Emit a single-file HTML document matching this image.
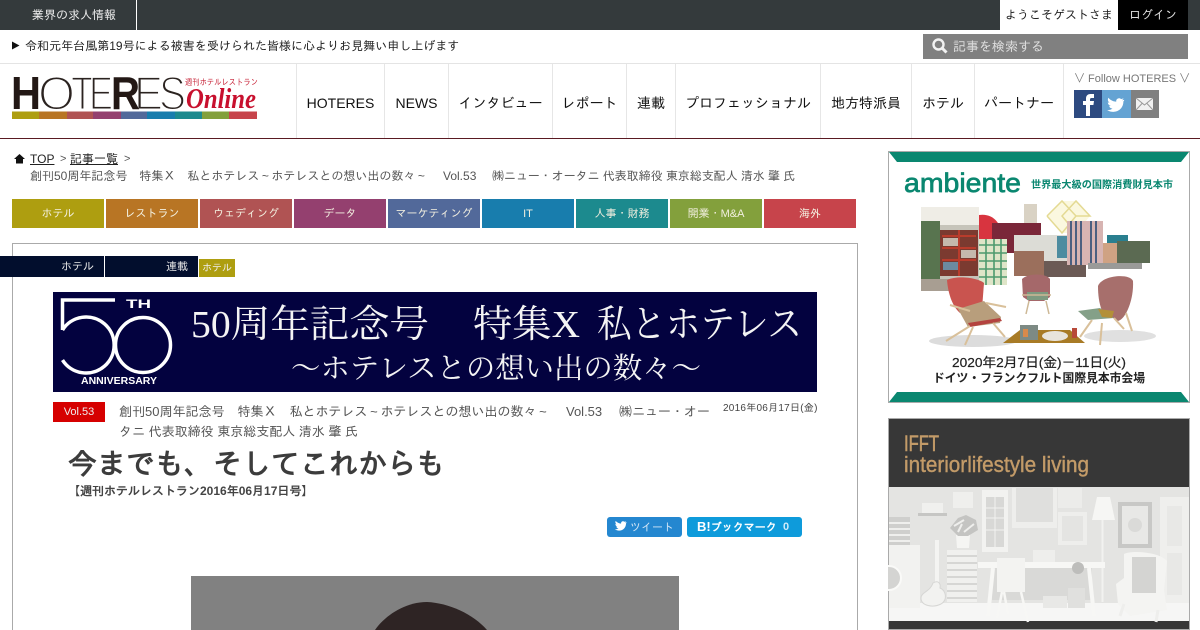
<!DOCTYPE html>
<html lang="ja">
<head>
<meta charset="utf-8">
<title>HOTERES Online</title>
<style>
html,body{margin:0;padding:0;background:#fff;width:1200px;height:630px;overflow:hidden;}
#p{position:relative;width:1200px;height:630px;overflow:hidden;font-family:"Liberation Sans","IPAGothic","Noto Sans CJK JP",sans-serif;font-size:12px;color:#333;}
.a{position:absolute;white-space:nowrap;}
.nav{position:absolute;top:64px;height:74px;line-height:78px;text-align:center;font-size:14px;color:#111;border-left:1px solid #e6e6e6;box-sizing:border-box;}
.cat{position:absolute;top:199px;width:92px;height:29px;line-height:30px;text-align:center;font-size:11px;color:#f3f0e0;}
.t{display:inline-block;width:1em;text-align:center;}
svg{position:absolute;display:block;}
</style>
</head>
<body>
<div id="p">
<!-- top bar -->
<div class="a" style="left:0;top:0;width:1200px;height:30px;background:#343a3c;"></div>
<div class="a" style="left:136px;top:0;width:1px;height:30px;background:#fff;"></div>
<div class="a" style="left:32px;top:0;line-height:30px;color:#eee;font-size:12px;">業界の求人情報</div>
<div class="a" style="left:1000px;top:0;width:118px;height:30px;background:#fff;line-height:30px;text-align:center;font-size:12px;color:#222;">ようこそゲストさま</div>
<div class="a" style="left:1118px;top:0;width:70px;height:30px;background:#000;line-height:30px;text-align:center;font-size:12px;color:#ddd;">ログイン</div>

<!-- notice -->
<svg style="left:12px;top:41px" width="8" height="9"><path d="M0 0.5L7.5 4.5L0 8.5Z" fill="#111"/></svg>
<div class="a" style="left:25px;top:38px;line-height:16px;font-size:12px;color:#222;letter-spacing:.03px;">令和元年台風第19号による被害を受けられた皆様に心よりお見舞い申し上げます</div>
<div class="a" style="left:923px;top:34px;width:265px;height:25px;background:#808080;"></div>
<svg style="left:931px;top:37px" width="18" height="18" viewBox="0 0 18 18"><circle cx="7.500" cy="7.500" r="5" fill="none" stroke="#f2f2f2" stroke-width="2.400"/><path d="M11 11L15.500 15.500" stroke="#f2f2f2" stroke-width="3"/></svg>
<div class="a" style="left:953px;top:34px;line-height:25px;font-size:13px;color:#ddd;">記事を検索する</div>

<!-- header lines -->
<div class="a" style="left:0;top:63px;width:1200px;height:1px;background:#e4e4e4;"></div>
<div class="a" style="left:0;top:138px;width:1200px;height:1px;background:#5a1a22;"></div>

<!-- logo -->
<svg style="left:12px;top:74px" width="250" height="48" viewBox="0 0 250 48">
<g font-family="Liberation Sans,sans-serif" font-size="47" fill="#2b2320" stroke="#fff" stroke-width="2">
<text x="26" y="35.500" textLength="37" lengthAdjust="spacingAndGlyphs">O</text>
<text x="59" y="35.500" textLength="23" lengthAdjust="spacingAndGlyphs">T</text>
<text x="77" y="35.500" textLength="24" lengthAdjust="spacingAndGlyphs">E</text>
<text x="122" y="35.500" textLength="29" lengthAdjust="spacingAndGlyphs">E</text>
<text x="147" y="35.500" textLength="27" lengthAdjust="spacingAndGlyphs">S</text>
</g>
<g font-family="Liberation Sans,sans-serif" font-size="46" font-weight="700" fill="#231815">
<text x="-1" y="35" textLength="30" lengthAdjust="spacingAndGlyphs">H</text>
<text x="99" y="35" textLength="29" lengthAdjust="spacingAndGlyphs">R</text>
</g>
<text x="173" y="11" font-family="Liberation Sans,IPAGothic,sans-serif" font-size="8.500" fill="#c8283c" textLength="73" lengthAdjust="spacingAndGlyphs">週刊ホテルレストラン</text>
<text x="174" y="34" font-family="Liberation Serif,serif" font-style="italic" font-weight="700" font-size="29" fill="#c8102e" textLength="70" lengthAdjust="spacingAndGlyphs">Online</text>
<rect x="0" y="37.500" width="27" height="7.500" fill="#ae9e10"/>
<rect x="27" y="37.500" width="28" height="7.500" fill="#b87524"/>
<rect x="55" y="37.500" width="26" height="7.500" fill="#b05353"/>
<rect x="81" y="37.500" width="28" height="7.500" fill="#94406f"/>
<rect x="109" y="37.500" width="26" height="7.500" fill="#52699a"/>
<rect x="135" y="37.500" width="28" height="7.500" fill="#187dad"/>
<rect x="163" y="37.500" width="27" height="7.500" fill="#1c8a8e"/>
<rect x="190" y="37.500" width="27" height="7.500" fill="#83a03c"/>
<rect x="217" y="37.500" width="28" height="7.500" fill="#c7444b"/>
</svg>

<!-- nav -->
<div class="nav" style="left:296px;width:88px;">HOTERES</div>
<div class="nav" style="left:384px;width:64px;">NEWS</div>
<div class="nav" style="left:448px;width:104px;">インタビュー</div>
<div class="nav" style="left:552px;width:74px;">レポート</div>
<div class="nav" style="left:626px;width:49px;">連載</div>
<div class="nav" style="left:675px;width:145px;">プロフェッショナル</div>
<div class="nav" style="left:820px;width:91px;">地方特派員</div>
<div class="nav" style="left:911px;width:63px;">ホテル</div>
<div class="nav" style="left:974px;width:89px;">パートナー</div>
<div class="a" style="left:1063px;top:64px;width:1px;height:74px;background:#e6e6e6;"></div>

<!-- follow -->
<div class="a" style="left:1074px;top:72px;line-height:14px;font-size:11px;color:#777;">∨ Follow HOTERES ∨</div>
<div class="a" style="left:1074px;top:90px;width:28px;height:28px;background:#2d4a80;"></div>
<div class="a" style="left:1102px;top:90px;width:29px;height:28px;background:#64a3d3;"></div>
<div class="a" style="left:1131px;top:90px;width:28px;height:28px;background:#808080;"></div>
<svg style="left:1074px;top:90px" width="85" height="28" viewBox="0 0 85 28">
<path d="M12 26V15H9V11H12V8.500C12 5.500 14 4 16.500 4H20V8H17.500C16.500 8 16 8.500 16 9.500V11H20L19.400 15H16V26Z" fill="#fff"/>
<path transform="translate(30.500 6.500) scale(1.450)" d="M13.500 2.200C13 2.400 12.500 2.500 12 2.600C12.500 2.300 12.900 1.800 13.100 1.200C12.600 1.500 12.100 1.700 11.500 1.800C10.100 .4 7.700 1.600 8.100 3.600C5.900 3.500 4 2.500 2.700 .9C2 2.100 2.400 3.600 3.500 4.300C3.100 4.300 2.700 4.200 2.300 4C2.300 5.300 3.200 6.300 4.400 6.500C4 6.600 3.600 6.700 3.200 6.600C3.500 7.600 4.400 8.300 5.500 8.300C4.400 9.200 3.200 9.500 1.800 9.400C7.100 12.600 13.200 9.200 13 3.400C13.400 3.100 13.700 2.700 13.500 2.200Z" fill="#fff"/>
<rect x="62" y="8" width="17" height="12" fill="#f1f1f1"/>
<path d="M62 8L70.500 15L79 8M62 20L68 13.500M79 20L73 13.500" fill="none" stroke="#999" stroke-width="1"/>
</svg>

<!-- breadcrumb -->
<svg style="left:14px;top:154px" width="12" height="10" viewBox="0 0 12 10"><path d="M5.500 0L11 5H9V9.500H2V5H0Z" fill="#111"/></svg>
<div class="a" style="left:30px;top:151px;line-height:16px;font-size:12px;color:#222;text-decoration:underline;">TOP</div>
<div class="a" style="left:60px;top:151px;line-height:16px;font-size:11px;color:#555;">&gt;</div>
<div class="a" style="left:70px;top:151px;line-height:16px;font-size:12px;color:#222;text-decoration:underline;">記事一覧</div>
<div class="a" style="left:124px;top:151px;line-height:16px;font-size:11px;color:#555;">&gt;</div>
<div class="a" style="left:30px;top:168px;line-height:16px;font-size:12px;color:#555;">創刊50周年記念号　特集Ｘ　私とホテレス<span class="t">~</span>ホテレスとの想い出の数々<span class="t">~</span></div>
<div class="a" style="left:443px;top:168px;line-height:16px;font-size:12px;color:#555;">Vol.53</div>
<div class="a" style="left:492px;top:168px;line-height:16px;font-size:12px;color:#555;letter-spacing:-.05px;">㈱ニュー・オータニ 代表取締役 東京総支配人 清水 肇 氏</div>

<!-- categories -->
<div class="cat" style="left:12px;background:#ae9e10;">ホテル</div>
<div class="cat" style="left:106px;background:#b87524;">レストラン</div>
<div class="cat" style="left:200px;background:#b05353;">ウェディング</div>
<div class="cat" style="left:294px;background:#94406f;">データ</div>
<div class="cat" style="left:388px;background:#52699a;">マーケティング</div>
<div class="cat" style="left:482px;background:#187dad;">IT</div>
<div class="cat" style="left:576px;background:#1c8a8e;">人事・財務</div>
<div class="cat" style="left:670px;background:#83a03c;">開業・M&amp;A</div>
<div class="cat" style="left:764px;background:#c7444b;">海外</div>

<!-- article box -->
<div class="a" style="left:12px;top:243px;width:844px;height:400px;border:1px solid #aaa;"></div>
<div class="a" style="left:0;top:256px;width:104px;height:21px;background:#020e2d;color:#e8e8e8;font-size:11px;line-height:22px;text-align:right;box-sizing:border-box;padding-right:10px;">ホテル</div>
<div class="a" style="left:105px;top:256px;width:93px;height:21px;background:#020e2d;color:#e8e8e8;font-size:11px;line-height:22px;text-align:right;box-sizing:border-box;padding-right:10px;">連載</div>
<div class="a" style="left:199px;top:259px;width:36px;height:18px;background:#ae9e10;color:#eee;font-size:10px;line-height:20px;text-align:center;">ホテル</div>

<!-- banner -->
<div class="a" style="left:53px;top:292px;width:764px;height:100px;background:#03023f;"></div>
<svg style="left:53px;top:292px" width="764" height="100" viewBox="0 0 764 100">
<path d="M62 8H9.500V38" fill="none" stroke="#fff" stroke-width="3.500"/>
<path d="M9.500 38A28 28 0 1 1 9.500 68" fill="none" stroke="#fff" stroke-width="3.500"/>
<circle cx="90" cy="53" r="27.500" fill="none" stroke="#fff" stroke-width="3.500"/>
<text x="73" y="16" font-family="Liberation Sans,sans-serif" font-weight="700" font-size="12" fill="#fff" textLength="25" lengthAdjust="spacingAndGlyphs">TH</text>
<text x="28" y="92" font-family="Liberation Sans,sans-serif" font-weight="700" font-size="10" fill="#fff" textLength="76" lengthAdjust="spacingAndGlyphs">ANNIVERSARY</text>
<g font-family="Liberation Serif,Noto Serif CJK JP,serif" fill="#f4f4f4">
<text x="138" y="45" font-size="38" textLength="238" lengthAdjust="spacingAndGlyphs">50周年記念号</text>
<text x="420" y="45" font-size="38" textLength="107" lengthAdjust="spacingAndGlyphs">特集X</text>
<text x="544" y="45" font-size="38" textLength="205" lengthAdjust="spacingAndGlyphs">私とホテレス</text>
<text x="238" y="86" font-size="29" textLength="410" lengthAdjust="spacingAndGlyphs">～ホテレスとの想い出の数々～</text>
</g>
</svg>

<!-- title block -->
<div class="a" style="left:53px;top:402px;width:52px;height:20px;background:#d60000;color:#eee;font-size:11px;line-height:20px;text-align:center;">Vol.53</div>
<div class="a" style="left:119px;top:402px;line-height:20px;font-size:13px;color:#555;">創刊50周年記念号　特集Ｘ　私とホテレス<span class="t">~</span>ホテレスとの想い出の数々<span class="t">~</span></div>
<div class="a" style="left:566px;top:402px;line-height:20px;font-size:13px;color:#555;">Vol.53</div>
<div class="a" style="left:619px;top:402px;line-height:20px;font-size:13px;color:#555;">㈱ニュー・オー</div>
<div class="a" style="left:119px;top:422px;line-height:20px;font-size:13px;color:#555;">タニ 代表取締役 東京総支配人 清水 肇 氏</div>
<div class="a" style="left:723px;top:402px;line-height:14px;font-size:10px;color:#444;letter-spacing:.25px;">2016年06月17日(金)</div>
<div class="a" style="left:68px;top:447px;line-height:36px;font-size:29px;font-weight:700;color:#3c3c3c;">今までも、そしてこれからも</div>
<div class="a" style="left:68px;top:483px;line-height:16px;font-size:12px;font-weight:700;color:#444;">【週刊ホテルレストラン2016年06月17日号】</div>

<!-- share -->
<div class="a" style="left:607px;top:517px;width:75px;height:20px;background:#2487d0;border-radius:3px;"></div>
<svg style="left:613px;top:520px" width="14" height="13" viewBox="0 0 14 13"><path d="M13.500 2.200C13 2.400 12.500 2.500 12 2.600C12.500 2.300 12.900 1.800 13.100 1.200C12.600 1.500 12.100 1.700 11.500 1.800C10.100 .4 7.700 1.600 8.100 3.600C5.900 3.500 4 2.500 2.700 .9C2 2.100 2.400 3.600 3.500 4.300C3.100 4.300 2.700 4.200 2.300 4C2.300 5.300 3.200 6.300 4.400 6.500C4 6.600 3.600 6.700 3.200 6.600C3.500 7.600 4.400 8.300 5.500 8.300C4.400 9.200 3.200 9.500 1.800 9.400C7.100 12.600 13.200 9.200 13 3.400C13.400 3.100 13.700 2.700 13.500 2.200Z" fill="#fff"/></svg>
<div class="a" style="left:630px;top:517px;line-height:22px;font-size:11px;color:#cfe4f5;">ツイート</div>
<div class="a" style="left:687px;top:517px;width:115px;height:20px;background:#0e9bdb;border-radius:3px;"></div>
<div class="a" style="left:697px;top:517px;line-height:20px;font-size:11px;font-weight:700;color:#fff;"><span style="font-size:13px;">B!</span>ブックマーク</div>
<div class="a" style="left:783px;top:517px;line-height:20px;font-size:11px;font-weight:700;color:#cfeaf8;">0</div>

<!-- photo -->
<svg style="left:191px;top:576px" width="488" height="54" viewBox="0 0 488 54">
<rect width="488" height="54" fill="#818181"/>
<path d="M184 54C192 42 212 26 236 26C258 27 282 38 296 54Z" fill="#2e2424"/>
</svg>

<!-- ad 1 -->
<svg style="left:888px;top:151px" width="302" height="252" viewBox="0 0 302 252">
<rect x=".5" y=".5" width="301" height="251" fill="#fff" stroke="#aaa"/>
<path d="M1 1H301L293 11H9Z" fill="#0a8770"/>
<path d="M9 241H293L301 251H1Z" fill="#0a8770"/>
<text x="16" y="41" font-family="Liberation Sans,sans-serif" font-size="27" fill="#0a8770" stroke="#0a8770" stroke-width=".7" textLength="117" lengthAdjust="spacingAndGlyphs">ambiente</text>
<text x="143" y="37" font-family="Liberation Sans,Noto Sans CJK JP,sans-serif" font-weight="700" font-size="10" fill="#0a8770" textLength="142" lengthAdjust="spacingAndGlyphs">世界最大級の国際消費財見本市</text>
<!-- collage -->
<rect x="33" y="56" width="58" height="84" fill="#c6c4ba"/>
<rect x="33" y="56" width="58" height="18" fill="#efede6"/>
<rect x="33" y="70" width="19" height="60" fill="#58744f"/>
<rect x="33" y="128" width="40" height="12" fill="#a89e92"/>
<rect x="52" y="79" width="38" height="46" fill="#7b3a30"/>
<path d="M54 85H88M54 97H88M54 109H88M71 79V125" stroke="#b93c2c" stroke-width="2"/>
<rect x="55" y="87" width="15" height="8" fill="#c5b8ac"/><rect x="73" y="99" width="15" height="8" fill="#c5b8ac"/><rect x="55" y="111" width="15" height="8" fill="#6c8aa0"/>
<path d="M91 88V64C105 62 114 72 114 88Z" fill="#d8343f"/>
<rect x="104" y="72" width="49" height="30" fill="#7a2739"/>
<rect x="136" y="53" width="13" height="19" fill="#d9d2c4"/>
<path d="M159 65L174 50L188 50L202 65L188 82L174 82Z" fill="#fbf8df"/>
<path d="M159 65L174 82L188 65L174 50L159 65M174 82L188 65L202 65M174 50L188 65L202 65L188 50L174 65L188 82" fill="none" stroke="#e4da93" stroke-width="1.500"/>
<rect x="126" y="84" width="71" height="41" fill="#dcdcd6"/>
<rect x="126" y="100" width="30" height="25" fill="#9b6f5c"/>
<rect x="169" y="85" width="15" height="22" fill="#4d8ca0"/>
<rect x="184" y="85" width="14" height="25" fill="#ece8df"/>
<rect x="156" y="110" width="42" height="16" fill="#6b5a55"/>
<rect x="179" y="70" width="36" height="44" fill="#d7b4b2"/>
<path d="M183 70V114M188 70V114M193 70V114M203 70V114M208 70V114" stroke="#4b5f80" stroke-width="2"/>
<rect x="215" y="92" width="14" height="20" fill="#cfa283"/>
<rect x="219" y="84" width="21" height="8" fill="#2a7f8f"/>
<rect x="229" y="90" width="33" height="22" fill="#5b6a52"/>
<rect x="200" y="112" width="54" height="6" fill="#9a9a98"/>
<rect x="91" y="88" width="28" height="46" fill="#dfe5c8"/>
<path d="M91 94H119M91 102H119M91 110H119M91 118H119M91 126H119M98 88V134M106 88V134M113 88V134" stroke="#4e9a6e" stroke-width="1.600"/>
<!-- shadows -->
<ellipse cx="85" cy="190" rx="44" ry="6" fill="#dcdcdc"/>
<ellipse cx="232" cy="185" rx="36" ry="6" fill="#e0e0e0"/>
<!-- chair 1 -->
<path d="M59 129C70 124 90 127 96 132L94 158L72 162C64 155 60 142 59 129Z" fill="#c9544f"/>
<path d="M70 158L96 150L113 166L112 172L80 176Z" fill="#b89e7c"/>
<path d="M80 172L112 167L114 170L82 176Z" fill="#b4433f"/>
<path d="M82 175L58 190M85 176L77 194M105 172L117 186M62 154L82 160M98 152L118 156" stroke="#d9c09a" stroke-width="2" fill="none"/>
<!-- chair 2 -->
<path d="M134 128C140 122 158 122 162 128V146L156 150H141L135 146Z" fill="#a5686a"/>
<rect x="139" y="141" width="21" height="8" fill="#7e9a80"/>
<path d="M141 150L138 163M158 150L161 163M134 144H163" stroke="#cdb896" stroke-width="1.500" fill="none"/>
<!-- chair 3 -->
<path d="M210 135C214 124 242 122 245 130C246 148 238 168 230 170L214 160C211 152 210 144 210 135Z" fill="#a76f6c"/>
<path d="M190 160L212 157L226 167L200 169Z" fill="#84a088"/>
<path d="M210 158L226 160L224 167L214 166Z" fill="#b39038"/>
<path d="M204 169L192 186M226 167L236 178M238 162L244 180M214 172L212 194" stroke="#d9c09a" stroke-width="2" fill="none"/>
<!-- rug -->
<path d="M115 192L132 179H182L197 192Z" fill="#a87b26"/>
<rect x="132" y="174" width="18" height="15" fill="#7d8a84"/>
<rect x="135" y="178" width="5" height="8" fill="#d88a4c"/>
<ellipse cx="167" cy="185" rx="13" ry="5" fill="#e8e4dc"/>
<rect x="184" y="177" width="5" height="10" fill="#b84a3a"/>
<text x="151" y="216" text-anchor="middle" font-family="Liberation Sans,Noto Sans CJK JP,sans-serif" font-size="13" fill="#222" stroke="#222" stroke-width=".2" textLength="174" lengthAdjust="spacingAndGlyphs">2020年2月7日(金)－11日(火)</text>
<text x="151" y="231" text-anchor="middle" font-family="Liberation Sans,Noto Sans CJK JP,sans-serif" font-size="12" fill="#222" font-weight="700" textLength="212" lengthAdjust="spacingAndGlyphs">ドイツ・フランクフルト国際見本市会場</text>
</svg>

<!-- ad 2 -->
<svg style="left:888px;top:418px" width="302" height="212" viewBox="0 0 302 212">
<rect width="302" height="212" fill="#373737"/>
<rect x=".5" y=".5" width="301" height="211" fill="none" stroke="#aaa"/>
<rect x="1" y="69" width="300" height="134" fill="#e4e4e2"/>
<text x="16" y="33" font-family="Liberation Sans,sans-serif" font-size="22" fill="#c39b68" stroke="#c39b68" stroke-width=".6" textLength="35" lengthAdjust="spacingAndGlyphs">IFFT</text>
<text x="16" y="54" font-family="Liberation Sans,sans-serif" font-size="22" fill="#c39b68" stroke="#c39b68" stroke-width=".4" textLength="185" lengthAdjust="spacingAndGlyphs">interiorlifestyle living</text>
<rect x="1" y="185" width="300" height="18" fill="#f6f6f5"/>
<!-- wall items -->
<rect x="30" y="95" width="29" height="3" fill="#c6c6c4"/>
<rect x="34" y="85" width="21" height="10" fill="#f0f0ee"/>
<rect x="65" y="74" width="20" height="16" fill="#efefed"/>
<rect x="94" y="72" width="26" height="62" fill="#f2f2f0"/>
<rect x="98" y="79" width="18" height="50" fill="#d8d8d6"/>
<path d="M98 90H116M98 100H116M98 112H116M107 79V129" stroke="#f2f2f0" stroke-width="1"/>
<rect x="124" y="70" width="45" height="40" fill="#eeeeec"/>
<rect x="128" y="70" width="37" height="34" fill="#dfdfdd"/>
<rect x="170" y="70" width="24" height="20" fill="#ececea"/>
<rect x="170" y="94" width="29" height="33" fill="#eeeeec"/>
<rect x="174" y="98" width="21" height="25" fill="#e4e4e2"/>
<path d="M204 102L209 79H222L227 102Z" fill="#f6f6f4"/>
<path d="M214.500 102V184" stroke="#f2f2f0" stroke-width="2"/>
<rect x="230" y="84" width="34" height="46" fill="#c8c8c6"/>
<rect x="234" y="88" width="26" height="38" fill="#e8e8e6"/>
<circle cx="247" cy="107" r="7" fill="#dadad8"/>
<rect x="272" y="79" width="29" height="106" fill="#efefed"/>
<rect x="279" y="88" width="15" height="40" fill="#e8e8e6"/>
<rect x="279" y="135" width="15" height="42" fill="#e8e8e6"/>
<!-- washer + towels -->
<rect x="1" y="99" width="21" height="28" fill="#cfcfcd"/>
<path d="M1 105H22M1 111H22M1 117H22M1 123H22" stroke="#efefed" stroke-width="2"/>
<rect x="1" y="127" width="31" height="63" fill="#f2f2f0"/>
<circle cx="1" cy="160" r="12" fill="#d4d4d2" stroke="#fafaf8" stroke-width="2"/>
<!-- guitar -->
<path d="M49 122V167" stroke="#f4f4f2" stroke-width="4"/>
<path d="M45 165C50 162 53 165 52 170C58 172 60 182 53 186C45 190 33 188 33 180C33 174 42 174 45 165Z" fill="#f2f2f0" stroke="#d6d6d4" stroke-width="1"/>
<!-- books and plant -->
<rect x="59" y="132" width="30" height="52" fill="#f0f0ee"/>
<path d="M59 138H89M59 145H89M59 152H89M59 159H89M59 166H89M59 173H89M59 180H89" stroke="#cdcdcb" stroke-width="1.500"/>
<path d="M68 117H82L81 130H69Z" fill="#f5f5f3"/>
<path d="M62 110L70 100L78 97L88 102L90 112L80 118H70Z" fill="#c4c4c2"/>
<path d="M66 108L76 102M76 114L86 106M70 114L74 106" stroke="#efefed" stroke-width="2"/>
<!-- desk and chair -->
<rect x="90" y="144" width="127" height="6" fill="#f7f7f5"/>
<rect x="104" y="150" width="100" height="32" fill="#d9d9d7"/>
<rect x="155" y="178" width="24" height="12" fill="#e8e8e6"/>
<rect x="180" y="170" width="17" height="20" fill="#e0e0de"/>
<path d="M105 150L100 198M201 150L206 198" stroke="#f7f7f5" stroke-width="4"/>
<rect x="109" y="140" width="28" height="34" fill="#f3f3f1"/>
<path d="M114 174L109 200M133 174L140 204M116 174L120 196" stroke="#f7f7f5" stroke-width="2.500"/>
<rect x="145" y="132" width="22" height="12" fill="#eeeeec"/>
<circle cx="190" cy="150" r="6" fill="#bdbdbb"/>
<!-- armchair -->
<path d="M236 136C244 132 272 134 279 143L276 172L279 192L242 198L230 186L228 166L236 160Z" fill="#f4f4f2"/>
<rect x="244" y="139" width="24" height="36" fill="#d4d4d2"/>
<path d="M232 198L236 186M268 204L270 192" stroke="#eeeeec" stroke-width="3"/>
</svg>
</div>
</body>
</html>
